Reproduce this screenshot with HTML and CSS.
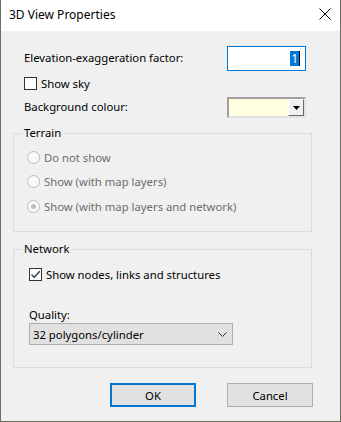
FILE: index.html
```html
<!DOCTYPE html>
<html>
<head>
    <title>3D View Properties</title>
    <link rel="stylesheet" href="styles.css">
</head>
<body>
    <div class="window">
        <div class="titlebar">
            <span class="title">3D View Properties</span>
            <svg class="close" width="12" height="12" viewBox="0 0 12 12">
                <path d="M0.5 0.5 L11.5 11.5 M11.5 0.5 L0.5 11.5" stroke="#000" stroke-width="1"/>
            </svg>
        </div>

        <div class="content">
            <div class="row row-elev">
                <label>Elevation-exaggeration factor:</label>
                <div class="textbox"><span class="sel">1</span><span class="caret"></span></div>
            </div>

            <div class="check-row sky-row">
                <span class="checkbox"></span>
                <span>Show sky</span>
            </div>

            <div class="row row-colour">
                <label>Background colour:</label>
                <div class="colour-combo">
                    <div class="swatch"></div>
                    <div class="drop-btn">
                        <svg width="7" height="4" viewBox="0 0 7 4"><path d="M0 0 H7 L3.5 4 Z" fill="#000"/></svg>
                    </div>
                </div>
            </div>

            <fieldset class="group terrain">
                <legend>Terrain</legend>
                <div class="radio-row disabled">
                    <span class="radio"></span>
                    <span>Do not show</span>
                </div>
                <div class="radio-row disabled">
                    <span class="radio"></span>
                    <span>Show (with map layers)</span>
                </div>
                <div class="radio-row disabled">
                    <span class="radio checked"></span>
                    <span>Show (with map layers and network)</span>
                </div>
            </fieldset>

            <fieldset class="group network">
                <legend>Network</legend>
                <div class="check-row nodes-row">
                    <span class="checkbox">
                        <svg width="11" height="11" viewBox="0 0 11 11"><path d="M1.5 5.5 L4.2 8.3 L9.8 2.2" fill="none" stroke="#333" stroke-width="1.3"/></svg>
                    </span>
                    <span>Show nodes, links and structures</span>
                </div>
                <div class="quality-label">Quality:</div>
                <div class="combo">
                    <span>32 polygons/cylinder</span>
                    <svg width="9" height="5" viewBox="0 0 9 5"><path d="M0.5 0.5 L4.5 4.5 L8.5 0.5" fill="none" stroke="#333" stroke-width="1"/></svg>
                </div>
            </fieldset>

            <div class="buttons">
                <button class="default">OK</button>
                <button>Cancel</button>
            </div>
        </div>
    </div>
</body>
</html>
```

FILE: styles.css
```css
body {
    margin: 0;
    font-family: "Noto Sans", "Open Sans", sans-serif;
    font-size: 11.3px;
    color: #000;
    background: #f0f0f0;
}

.window {
    width: 339px;
    height: 421px;
    border: 1px solid #6e6e5e;
    border-top: none;
    background: #f0f0f0;
    display: flex;
    flex-direction: column;
}

.titlebar {
    height: 31px;
    background: #fff;
    display: flex;
    align-items: center;
    padding: 0 9px 0 8px;
    flex-shrink: 0;
}

.title {
    font-size: 12px;
    flex: 1;
    margin-top: -3px;
}

.close {
    margin-top: -3px;
}

.content {
    padding-top: 15px;
}

.row {
    display: grid;
    grid-template-columns: 203px 79px;
    align-items: center;
    padding-left: 23px;
}

.row-elev {
    height: 25px;
}

.row-elev label {
    margin-top: -3px;
}

.textbox {
    height: 23px;
    border: 1px solid #0078d7;
    background: #fff;
    display: flex;
    align-items: center;
    justify-content: flex-end;
    padding-right: 5px;
}

.sel {
    background: #0078d7;
    color: #fff;
    font-size: 12px;
    line-height: 15px;
    padding: 0 1px;
}

.caret {
    width: 1px;
    height: 15px;
    background: #000;
}

.check-row {
    display: flex;
    align-items: center;
    gap: 4px;
}

.checkbox {
    width: 11px;
    height: 11px;
    border: 1px solid #333;
    background: #fff;
    display: flex;
    align-items: center;
    justify-content: center;
}

.sky-row {
    margin-top: 6px;
    padding-left: 23px;
    height: 13px;
}

.row-colour {
    margin-top: 7px;
    height: 21px;
}

.row-colour label {
    margin-top: -3px;
}

.colour-combo {
    height: 17px;
    border: 2px solid #a0a0a0;
    border-right-color: #e3e3e3;
    border-bottom-color: #e3e3e3;
    display: flex;
    background: #ffffe0;
}

.swatch {
    flex: 1;
}

.drop-btn {
    width: 16px;
    background: #f0f0f0;
    border-left: 1px solid #fff;
    border-top: 1px solid #fff;
    border-right: 1px solid #696969;
    border-bottom: 1px solid #696969;
    box-sizing: border-box;
    display: flex;
    align-items: center;
    justify-content: center;
}

.group {
    margin: 0 0 0 12px;
    width: 299px;
    box-sizing: border-box;
    border: 1px solid #dcdcdc;
    padding: 0;
}

.group legend {
    margin-left: 8px;
    padding: 0 2px;
    line-height: 16px;
}

.terrain {
    margin-top: 7px;
    height: 107px;
    padding-top: 4px;
}

.radio-row {
    display: flex;
    align-items: center;
    gap: 4px;
    height: 24.5px;
    padding-left: 13px;
}

.disabled {
    color: #6d6d6d;
}

.radio {
    width: 11px;
    height: 11px;
    border: 1px solid #bcbcbc;
    border-radius: 50%;
    background: #fafafa;
    display: flex;
    align-items: center;
    justify-content: center;
}

.radio.checked::after {
    content: "";
    width: 5px;
    height: 5px;
    border-radius: 50%;
    background: #bcbcbc;
}

.network {
    margin-top: 9px;
    height: 127px;
    padding-top: 11px;
}

.nodes-row {
    padding-left: 15px;
    height: 13px;
}

.quality-label {
    margin: 26px 0 0 15px;
    line-height: 16px;
}

.combo {
    margin: 0 0 0 15px;
    width: 204px;
    height: 22px;
    box-sizing: border-box;
    border: 1px solid #adadad;
    background: #e1e1e1;
    display: flex;
    align-items: center;
    justify-content: space-between;
    padding: 0 5px 0 3px;
}

.buttons {
    display: flex;
    gap: 31px;
    margin: 15px 0 0 109px;
}

button {
    width: 86px;
    height: 24px;
    border: 1px solid #adadad;
    background: #e1e1e1;
    font-family: inherit;
    font-size: 11.3px;
    color: #000;
    padding: 0;
}

button.default {
    border: 2px solid #0078d7;
}
```
